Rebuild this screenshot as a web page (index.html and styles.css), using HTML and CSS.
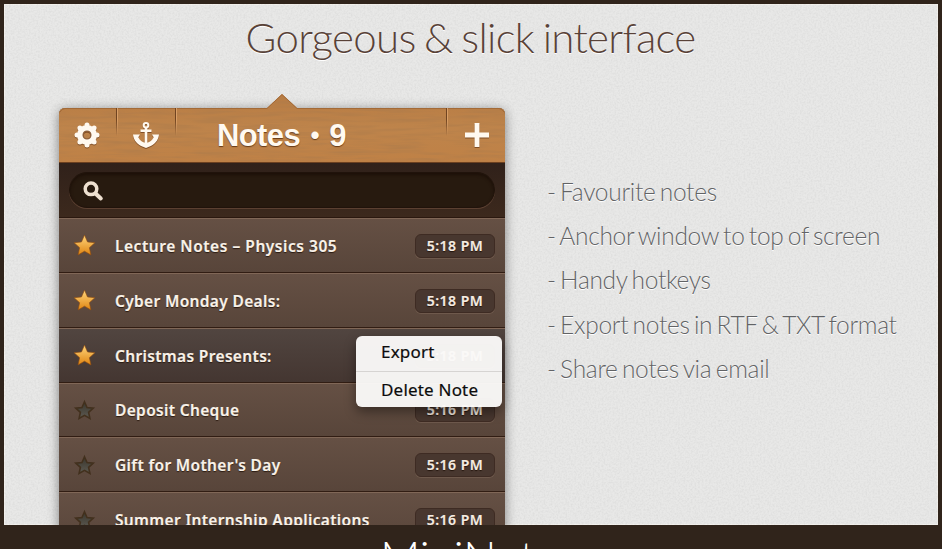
FILE: index.html
```html
<!DOCTYPE html>
<html lang="en">
<head>
<meta charset="utf-8">
<title>MiniNote</title>
<link rel="stylesheet" href="styles.css">
</head>
<body>
<svg class="defs" width="0" height="0" aria-hidden="true">
  <defs>
    <filter id="paper" x="0" y="0" width="100%" height="100%">
      <feTurbulence type="fractalNoise" baseFrequency=".55" numOctaves="2" seed="4"/>
      <feColorMatrix values="0 0 0 0 .45  0 0 0 0 .45  0 0 0 0 .45  .4 0 0 0 -.15"/>
    </filter>
    <filter id="wood" x="0" y="0" width="100%" height="100%">
      <feTurbulence type="fractalNoise" baseFrequency=".022 .28" numOctaves="3" seed="9"/>
      <feColorMatrix values="0 0 0 0 .42  0 0 0 0 .2  0 0 0 0 .07  1.5 0 0 0 -.6"/>
    </filter>
    <linearGradient id="gold" x1="0" y1="0" x2="0" y2="1"><stop offset="0" stop-color="#ffd67c"/><stop offset="1" stop-color="#df8411"/></linearGradient>
    <linearGradient id="dim" x1="0" y1="0" x2="0" y2="1"><stop offset="0" stop-color="#38352c"/><stop offset="1" stop-color="#5d5a52"/></linearGradient>
    <path id="star" d="M12 2l2.900 6.600 7.100.7-5.300 4.800 1.500 7L12 17.500l-6.200 3.600 1.500-7L2 9.300l7.100-.7z"/>
  </defs>
</svg>
<main class="sheet">
  <svg class="grain" width="934" height="521" aria-hidden="true"><rect width="934" height="521" filter="url(#paper)"/></svg>
  <h1 class="headline"><span>Gorgeous &amp; slick interface</span></h1>
  <div class="columns">
    <section class="panel">
      <header class="bar">
        <svg class="wood" width="446" height="68" viewBox="0 0 446 68" aria-hidden="true">
          <defs><clipPath id="barShape"><path d="M0 68V20q0-6 6-6H208L223 0l15 14H440q6 0 6 6V68z"/></clipPath>
          <linearGradient id="tan" x1="0" y1="0" x2="0" y2="1"><stop offset="0" stop-color="#b77b43"/><stop offset=".5" stop-color="#be844b"/><stop offset="1" stop-color="#bf8146"/></linearGradient></defs>
          <g clip-path="url(#barShape)"><rect width="446" height="68" fill="url(#tan)"/><rect width="446" height="68" filter="url(#wood)"/></g>
          <path d="M1 18q2-3.500 5-3.500H208L223 .5l15 14H440q3 0 5 3.500" fill="none" stroke="#a36a37" stroke-width="1"/>
        </svg>
        <div class="tool gear"><svg width="26" height="26" viewBox="0 0 26 26"><circle cx="13" cy="13" r="7" fill="none" stroke="#fff9f0" stroke-width="6"/><g fill="#fff9f0"><circle cx="13" cy="3" r="2.500"/><circle cx="13" cy="23" r="2.500"/><circle cx="3" cy="13" r="2.500"/><circle cx="23" cy="13" r="2.500"/><circle cx="5.900" cy="5.900" r="2.500"/><circle cx="20.100" cy="5.900" r="2.500"/><circle cx="5.900" cy="20.100" r="2.500"/><circle cx="20.100" cy="20.100" r="2.500"/></g><circle cx="13" cy="13" r="3.900" fill="none" stroke="#8e603c" stroke-width="1.300"/></svg></div>
        <div class="tool anchor"><svg width="26" height="26" viewBox="0 0 26 26" fill="none" stroke="#fff9f0"><circle cx="13" cy="3.300" r="2.300" stroke-width="2"/><path d="M13 5.500v18M7.500 8.700h11" stroke-width="2.600"/><path d="M0 12.500h7l-1.700 2.800c1.300 3 3.700 5 7.700 5.700 4-.7 6.400-2.700 7.700-5.700L19 12.500h7c-.6 6-5 10.800-10 12.200L13 26l-3-1.300C5 23.300.6 18.500 0 12.500z" fill="#fff9f0" stroke="none"/></svg></div>
        <h2 class="title"><span>Notes <i class="dot">•</i> 9</span></h2>
        <div class="tool add"><svg width="24" height="24" viewBox="0 0 24 24"><path fill="#fff9f0" d="M9.600 0h4.800v9.600H24v4.800h-9.600V24H9.600v-9.600H0V9.600h9.600z"/></svg></div>
      </header>
      <div class="search"><div class="field"><svg width="21" height="21" viewBox="0 0 21 21" fill="none" stroke="#eee0d0"><circle cx="8" cy="7.800" r="5.800" stroke-width="3.500"/><path d="M12.500 12.500l5.300 5" stroke-width="4" stroke-linecap="round"/></svg></div></div>
      <ul class="notes">
        <li class="note"><svg class="star" viewBox="0 0 24 24"><use href="#star"/></svg><span class="name wide">Lecture Notes – Physics 305</span><span class="time">5:18 PM</span></li>
        <li class="note"><svg class="star" viewBox="0 0 24 24"><use href="#star"/></svg><span class="name">Cyber Monday Deals:</span><span class="time">5:18 PM</span></li>
        <li class="note active"><svg class="star" viewBox="0 0 24 24"><use href="#star"/></svg><span class="name">Christmas Presents:</span><span class="time">5:18 PM</span>
          <div class="menu"><div class="item">Export</div><div class="item">Delete Note</div></div></li>
        <li class="note"><svg class="star off" viewBox="0 0 24 24"><use href="#star"/></svg><span class="name">Deposit Cheque</span><span class="time">5:16 PM</span></li>
        <li class="note"><svg class="star off" viewBox="0 0 24 24"><use href="#star"/></svg><span class="name">Gift for Mother's Day</span><span class="time">5:16 PM</span></li>
        <li class="note"><svg class="star off" viewBox="0 0 24 24"><use href="#star"/></svg><span class="name">Summer Internship Applications</span><span class="time">5:16 PM</span></li>
      </ul>
    </section>
    <ul class="features">
      <li>- Favourite notes</li>
      <li>- Anchor window to top of screen</li>
      <li>- Handy hotkeys</li>
      <li>- Export notes in RTF &amp; TXT format</li>
      <li>- Share notes via email</li>
    </ul>
  </div>
</main>
<footer class="brand"><span>MiniNote</span></footer>
</body>
</html>
```
FILE: styles.css
```css
* { box-sizing: border-box; }
body { margin: 0; height: 549px; overflow: hidden; background: #30241b; padding: 4px 4px 0; }
h1, h2, ul { margin: 0; padding: 0; font-weight: normal; list-style: none; }
svg { display: block; flex: none; }
.defs { position: absolute; }
.sheet { position: relative; height: 521px; overflow: hidden; background: #e8e8e7; box-shadow: inset 0 0 0 1px #f3f1ed; }
.grain { position: absolute; inset: 0; }
.headline { position: relative; height: 104px; padding: 8px 1px 0 0; text-align: center; font: 300 42px/50px Lato, sans-serif; letter-spacing: -.68px; word-spacing: -2.2px; color: #594238; text-shadow: 0 1px #fff; }
.columns { position: relative; display: flex; padding-left: 55px; }
.panel { width: 446px; flex: none; border-radius: 6px 6px 0 0; background: #3a271c; box-shadow: 0 2px 12px rgba(0,0,0,.45); }
.bar { position: relative; display: flex; align-items: center; height: 55px; border-bottom: 1px solid #6b4020; }
.wood { position: absolute; top: -14px; left: 0; }
.tool { position: relative; display: flex; align-items: center; justify-content: center; height: 54px; }
.tool svg { filter: drop-shadow(0 1px 0 rgba(90,45,15,.6)); }
.gear { width: 59px; padding-right: 3px; }
.anchor { width: 59px; padding-right: 3px; }
.add { width: 58px; padding-left: 1px; }
.gear::after, .anchor::after, .add::before { content: ""; position: absolute; top: 0; right: 0; width: 2px; height: 28px; background: linear-gradient(90deg, #704421 50%, #d99f67 50%); -webkit-mask: linear-gradient(#000 40%, transparent); mask: linear-gradient(#000 40%, transparent); }
.add::before { left: -1px; right: auto; }
.title { position: relative; flex: 1; padding-left: 40px; font: bold 31px/55px "Liberation Sans", sans-serif; letter-spacing: -.6px; color: #fff9f0; text-shadow: 0 1px 1px rgba(80,40,10,.8); white-space: nowrap; }
.dot { display: inline-block; width: 13px; font-size: 26px; line-height: 22px; font-style: normal; text-align: center; position: relative; top: -2px; }
.search { height: 55px; padding: 9px 10px; background: linear-gradient(#30211a, #3c291d); border-bottom: 1px solid #2a180f; }
.field { height: 36px; border-radius: 18px; padding: 8px 13px; background: #271a0f; border: 1px solid #20130b; box-shadow: inset 0 2px 3px #1d1008, 0 1px #5b4031; }
.note { position: relative; display: flex; align-items: center; height: 54.85px; padding: 1px 10px 0 13px; border-top: 1px solid #806757; border-bottom: 1px solid #311d13; background: linear-gradient(#655044, #58453a); }
.note.active { background: linear-gradient(#514540, #443631); z-index: 1; }
.star { width: 25px; height: 25px; fill: url(#gold); stroke: #8e4c10; stroke-width: .6; overflow: visible; }
.star.off { width: 21px; height: 21px; margin: 0 2px; fill: url(#dim); stroke: #42301d; stroke-width: 1.800; }
.name { flex: 1; padding-left: 18px; font: 600 15.5px/20px "Noto Sans", sans-serif; letter-spacing: .34px; -webkit-text-stroke: .2px; color: #f9f2e9; text-shadow: 0 1px 1px #2a1a10; white-space: nowrap; }
.wide { letter-spacing: .54px; }
.time { width: 80px; height: 24px; text-align: center; border: 1px solid #3e2b23; border-radius: 6px; background: #48372f; box-shadow: 0 1px #6e594c; font: 600 14px/22px "Noto Sans", sans-serif; letter-spacing: .5px; -webkit-text-stroke: .2px; color: #f6ece2; text-shadow: 0 1px 1px #21130b; }
.menu { position: absolute; left: 297px; top: 7px; width: 146px; height: 71px; border-radius: 6px; background: rgba(250,249,248,.965); box-shadow: 0 5px 12px rgba(0,0,0,.4); font: 400 17px/32px "Noto Sans", sans-serif; letter-spacing: .2px; -webkit-text-stroke: .2px; color: #0c0c0c; }
.item { padding-left: 25px; height: 35px; }
.item + .item { height: 36px; line-height: 36px; border-top: 1px solid #d6d4d2; }
.features { padding: 62px 0 0 42px; font: 300 24.5px/44.2px Lato, sans-serif; letter-spacing: -.3px; word-spacing: -2px; color: #626365; text-shadow: 0 1px #fff; white-space: nowrap; }
.brand { height: 24px; overflow: hidden; text-align: center; font: 300 44px/52px Lato, sans-serif; color: #fff; padding: 5px 4px 0 0; }
```
